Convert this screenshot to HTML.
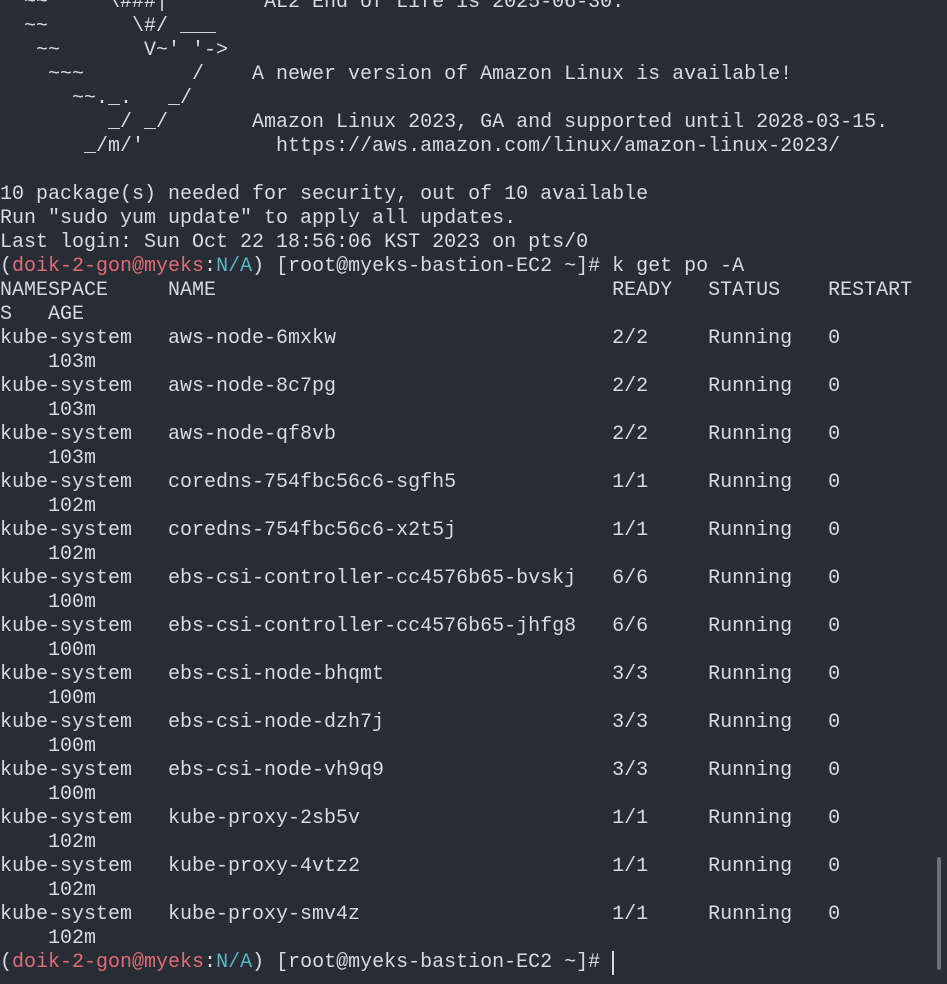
<!DOCTYPE html>
<html><head><meta charset="utf-8"><style>
html,body{margin:0;padding:0;background:#282c34;width:947px;height:984px;overflow:hidden}
pre{margin:0;position:absolute;left:0;top:-9px;font-family:"Liberation Mono",monospace;font-size:20px;line-height:24px;color:#d7dae0;letter-spacing:0}
.r{color:#e06c75}.c{color:#56b6c2}
.cur{display:inline-block;width:2px;height:24px;background:#d7dae0;vertical-align:top;margin-left:0}
.sb{position:absolute;left:937px;top:857px;width:4px;height:113px;background:#6b6f76;border-radius:2px}
</style></head><body>
<pre>  ~~     \###|        AL2 End of Life is 2025-06-30.
  ~~       \#/ ___
   ~~       V~' '->
    ~~~         /    A newer version of Amazon Linux is available!
      ~~._.   _/
         _/ _/       Amazon Linux 2023, GA and supported until 2028-03-15.
       _/m/'           https://aws.amazon.com/linux/amazon-linux-2023/

10 package(s) needed for security, out of 10 available
Run "sudo yum update" to apply all updates.
Last login: Sun Oct 22 18:56:06 KST 2023 on pts/0
(<span class="r">doik-2-gon@myeks</span>:<span class="c">N/A</span>) [root@myeks-bastion-EC2 ~]# k get po -A
NAMESPACE     NAME                                 READY   STATUS    RESTART
S   AGE
kube-system   aws-node-6mxkw                       2/2     Running   0
    103m
kube-system   aws-node-8c7pg                       2/2     Running   0
    103m
kube-system   aws-node-qf8vb                       2/2     Running   0
    103m
kube-system   coredns-754fbc56c6-sgfh5             1/1     Running   0
    102m
kube-system   coredns-754fbc56c6-x2t5j             1/1     Running   0
    102m
kube-system   ebs-csi-controller-cc4576b65-bvskj   6/6     Running   0
    100m
kube-system   ebs-csi-controller-cc4576b65-jhfg8   6/6     Running   0
    100m
kube-system   ebs-csi-node-bhqmt                   3/3     Running   0
    100m
kube-system   ebs-csi-node-dzh7j                   3/3     Running   0
    100m
kube-system   ebs-csi-node-vh9q9                   3/3     Running   0
    100m
kube-system   kube-proxy-2sb5v                     1/1     Running   0
    102m
kube-system   kube-proxy-4vtz2                     1/1     Running   0
    102m
kube-system   kube-proxy-smv4z                     1/1     Running   0
    102m
(<span class="r">doik-2-gon@myeks</span>:<span class="c">N/A</span>) [root@myeks-bastion-EC2 ~]# <span class="cur"></span></pre>
<div class="sb"></div>
</body></html>
